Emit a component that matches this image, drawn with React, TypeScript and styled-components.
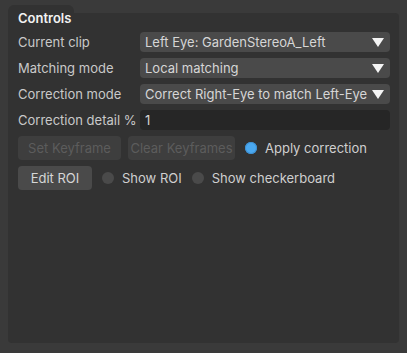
import * as React from 'react';
import styled, { createGlobalStyle } from 'styled-components';

const GlobalStyle = createGlobalStyle`
  html, body {
    margin: 0;
    padding: 0;
    background: #3a3a3a;
  }
  body {
    font-family: Inter, "Liberation Sans", sans-serif;
    -webkit-font-smoothing: antialiased;
  }
`;

const Page = styled.div`
  width: 407px;
  height: 353px;
  box-sizing: border-box;
  padding: 5px 8px 10px 8px;
  display: flex;
  flex-direction: column;
  background: #3a3a3a;
`;

const Tab = styled.div`
  align-self: flex-start;
  width: 66px;
  height: 8px;
  box-sizing: border-box;
  background: #323232;
  border-radius: 6px 6px 0 0;
  padding: 5px 0 0 10px;
  color: #f2f2f2;
  font-size: 13px;
  font-weight: 600;
  line-height: 16px;
  white-space: nowrap;
  position: relative;
  z-index: 1;
`;

const Panel = styled.section`
  flex: 1;
  background: #323232;
  border-radius: 0 4px 4px 4px;
  padding: 19px 10px 10px 10px;
  display: flex;
  flex-direction: column;
  gap: 6px;
`;

const FieldRow = styled.div`
  display: grid;
  grid-template-columns: 122px 250px;
  height: 20px;
  align-items: center;
`;

const Label = styled.span`
  color: #c9c9c9;
  font-size: 13px;
  white-space: nowrap;
`;

const Select = styled.div`
  height: 20px;
  box-sizing: border-box;
  background: #4a4a4a;
  border-radius: 4px;
  padding: 0 6px 0 5px;
  display: flex;
  align-items: center;
  justify-content: space-between;
  color: #d6d6d6;
  font-size: 13px;
  white-space: nowrap;
`;

const Arrow = styled.span`
  width: 0;
  height: 0;
  border-left: 6px solid transparent;
  border-right: 6px solid transparent;
  border-top: 9px solid #f4f4f4;
  flex-shrink: 0;
`;

const TextInput = styled.div`
  height: 20px;
  box-sizing: border-box;
  background: #262626;
  border-radius: 4px;
  padding: 0 5px;
  display: flex;
  align-items: center;
  color: #d6d6d6;
  font-size: 13px;
`;

const ButtonRow = styled.div`
  display: flex;
  align-items: center;
  height: 24px;
  gap: 7px;
  margin-top: 0;
`;

const Button = styled.button<{ $disabled?: boolean; $w: number }>`
  width: ${(p) => p.$w}px;
  height: 24px;
  border: none;
  border-radius: 4px;
  background: ${(p) => (p.$disabled ? '#3e3e3e' : '#4a4a4a')};
  color: ${(p) => (p.$disabled ? '#5c5c5c' : '#d6d6d6')};
  font-family: inherit;
  font-size: 13px;
  padding: 0;
  white-space: nowrap;
  overflow: hidden;
`;

const Check = styled.label`
  display: flex;
  align-items: center;
  gap: 8px;
  color: #cfcfcf;
  font-size: 13px;
  white-space: nowrap;
  margin-left: 3px;
`;

const Dot = styled.span<{ $on?: boolean }>`
  width: 12px;
  height: 12px;
  border-radius: 50%;
  background: ${(p) => (p.$on ? '#4aa8f0' : '#4a4a4a')};
  box-shadow: ${(p) => (p.$on ? 'inset 0 0 0 1px #3e8fd0' : 'none')};
`;

export default function App() {
  return (
    <>
      <GlobalStyle />
      <Page>
        <Tab>Controls</Tab>
        <Panel>
          <FieldRow>
            <Label>Current clip</Label>
            <Select>
              Left Eye: GardenStereoA_Left
              <Arrow />
            </Select>
          </FieldRow>
          <FieldRow>
            <Label>Matching mode</Label>
            <Select>
              Local matching
              <Arrow />
            </Select>
          </FieldRow>
          <FieldRow>
            <Label>Correction mode</Label>
            <Select>
              Correct Right-Eye to match Left-Eye
              <Arrow />
            </Select>
          </FieldRow>
          <FieldRow>
            <Label>Correction detail %</Label>
            <TextInput>1</TextInput>
          </FieldRow>
          <ButtonRow>
            <Button $disabled $w={103}>Set Keyframe</Button>
            <Button $disabled $w={107}>Clear Keyframes</Button>
            <Check>
              <Dot $on />
              Apply correction
            </Check>
          </ButtonRow>
          <ButtonRow>
            <Button $w={74}>Edit ROI</Button>
            <Check>
              <Dot />
              Show ROI
            </Check>
            <Check>
              <Dot />
              Show checkerboard
            </Check>
          </ButtonRow>
        </Panel>
      </Page>
    </>
  );
}
